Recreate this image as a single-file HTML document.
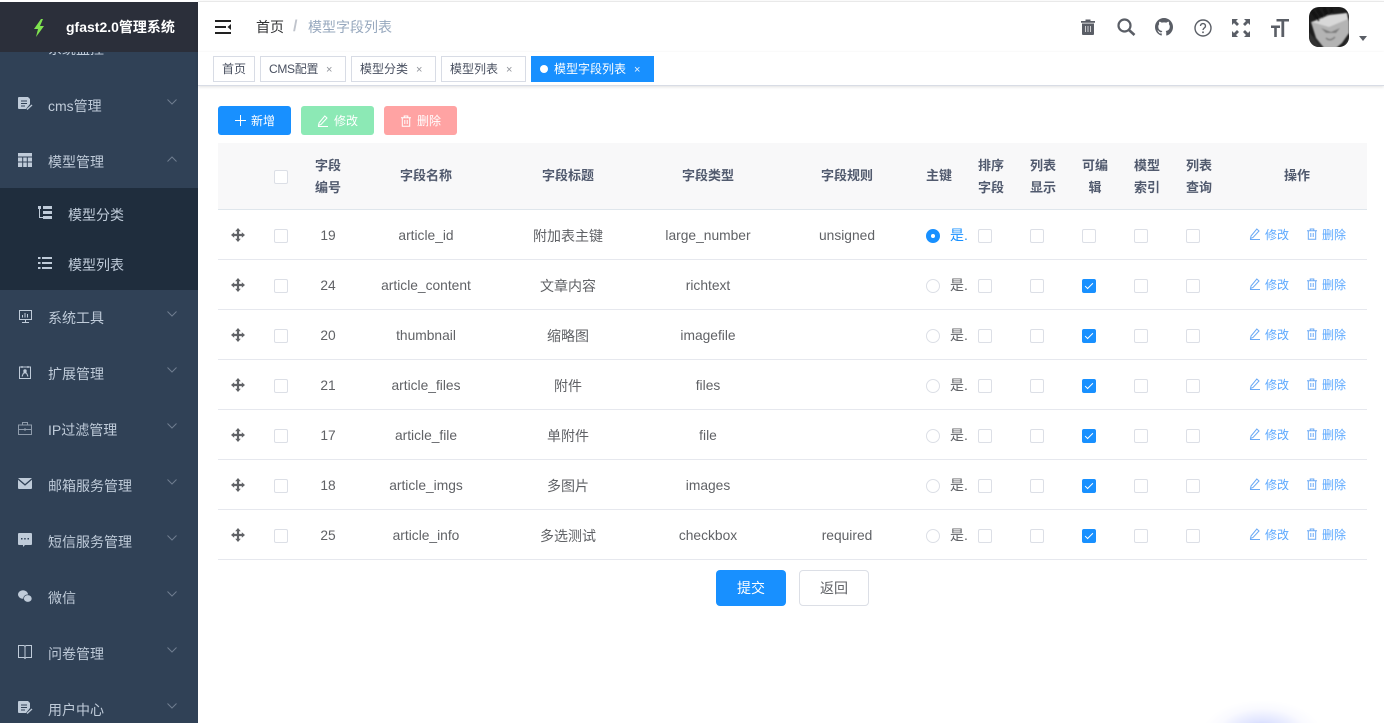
<!DOCTYPE html>
<html lang="zh-CN">
<head>
<meta charset="utf-8">
<title>模型字段列表</title>
<style>
*{box-sizing:border-box}
html,body{margin:0;padding:0;width:1384px;height:723px;overflow:hidden;background:#fff}
body{position:relative;font-family:"Liberation Sans","Noto Sans CJK SC",sans-serif;font-size:14px;color:#606266}
.a{position:absolute;white-space:nowrap}
svg{position:absolute;display:block;overflow:visible}
#side{position:absolute;left:0;top:2px;width:198px;height:721px;background:#304156;overflow:hidden}
#si{position:absolute;left:0;top:-2px;width:198px;height:723px}
#sub{position:absolute;left:0;top:188px;width:198px;height:102px;background:#1f2d3d}
#logo{position:absolute;left:0;top:2px;width:198px;height:50px;background:#2b2f3a}
.m{position:absolute;left:48px;font-size:14px;line-height:20px;color:#bfcbd9;white-space:nowrap}
.ar{position:absolute;left:167px;width:10px;height:6px}
#top{position:absolute;left:198px;top:1px;width:1186px;height:51px;background:#fff;border-top:1px solid #e9e9e9;box-shadow:0 1px 4px rgba(0,21,41,.08)}
#tags{position:absolute;left:198px;top:52px;width:1186px;height:34px;background:#fff;border-bottom:1px solid #d8dce5;box-shadow:0 1px 3px 0 rgba(0,0,0,.12)}
.tag{position:absolute;top:56px;height:26px;border:1px solid #d8dce5;background:#fff;color:#495060;font-size:12px;line-height:25px;padding-left:8px;white-space:nowrap}
.tag i{position:absolute;top:1px;font-style:normal;font-size:11px;color:#909399}
.btn{position:absolute;top:106px;width:73px;height:29px;border-radius:3px;color:#fff;font-size:12px;line-height:29px}
.btn span{position:absolute;left:33px;top:1px}
#th{position:absolute;left:218px;top:143px;width:1149px;height:67px;background:#f8f8f9;border-bottom:1px solid #dfe6ec}
.h{position:absolute;color:#515a6e;font-size:13px;line-height:22px;text-align:center;white-space:nowrap;font-weight:700}
.row{position:absolute;left:218px;width:1149px;height:50px;border-bottom:1px solid #e6e8ee}
.c{position:absolute;top:16px;line-height:20px;font-size:13.8px;color:#606266;text-align:center;white-space:nowrap;transform:translateX(-50%)}
.c.z{font-size:14px}
.cb{position:absolute;top:19px;width:14px;height:14px;border:1px solid #dcdfe6;border-radius:2px;background:#fff}
.cb.on{background:#1890ff;border-color:#1890ff}
.cb.on:after{content:"";position:absolute;left:4px;top:1px;width:3px;height:7px;border:1px solid #fff;border-left:0;border-top:0;transform:rotate(45deg)}
.rd{position:absolute;left:708px;top:19px;width:14px;height:14px;border:1px solid #dcdfe6;border-radius:50%;background:#fff}
.rd.on{background:#1890ff;border-color:#1890ff}
.rd.on:after{content:"";position:absolute;left:4px;top:4px;width:4px;height:4px;border-radius:50%;background:#fff}
.yes{position:absolute;left:732px;top:15px;line-height:20px;font-size:14px;width:18px;overflow:hidden;white-space:nowrap;color:#606266}
.yes.on{color:#1890ff}
.op{position:absolute;top:16px;font-size:12px;line-height:18px;color:#5ba8ff;white-space:nowrap}
</style>
</head>
<body>
<svg width="0" height="0" style="position:absolute">
<defs>
<symbol id="move" viewBox="0 0 14 14"><path d="M7 0 9.800 3.200H8.100v2.700h2.700V4.200L14 7l-3.200 2.800V8.100H8.100v2.700h1.700L7 14l-2.800-3.200h1.700V8.100H3.200v1.700L0 7l3.200-2.800v1.700h2.700V3.200H4.200z" fill="#606266"/></symbol>
<symbol id="pen" viewBox="0 0 12 12"><path d="M7.800 1 10 3 4 9.500 1.500 10.500 2 8zM1 11.500h10" fill="none" stroke="#6aa9f5" stroke-width="1"/></symbol>
<symbol id="bin" viewBox="0 0 12 12"><path d="M1 2.700h10M4.200 2.500V1h3.600v1.500M2.300 2.700v8.600h7.400V2.700M4.800 5v4M7.200 5v4" fill="none" stroke="#6aa9f5" stroke-width="1"/></symbol>
<symbol id="dn" viewBox="0 0 10 6"><path d="M.5.5 5 5 9.500.5" fill="none" stroke="#6f7d8f" stroke-width="1"/></symbol>
<symbol id="doc" viewBox="0 0 15 14"><path d="M1 0h9l2 2v5L8 12H1a1 1 0 0 1-1-1V1a1 1 0 0 1 1-1z" fill="#bfcbd9"/><path d="M3 4h6M3 6.500h6M3 9h4" stroke="#304156" stroke-width="1.100"/><path d="M9 12.500 14 8" stroke="#bfcbd9" stroke-width="1.300"/></symbol>
</defs>
</svg>

<div id="side"><div id="si">
  <div class="m" style="top:39px">系统监控</div>
  <svg style="left:18px;top:47px" width="14" height="5"><rect x="0" y="3" width="14" height="1.500" fill="#bfcbd9"/><rect x="6" y="0" width="2" height="3" fill="#bfcbd9"/></svg>
  <svg style="left:18px;top:97px" width="15" height="14"><use href="#doc" width="15" height="14"/></svg>
  <div class="m" style="top:96px">cms管理</div>
  <svg class="ar" style="top:99px"><use href="#dn" width="10" height="6"/></svg>
  <svg style="left:18px;top:153px" width="14" height="14" viewBox="0 0 14 14"><path d="M0 0h14v14H0z" fill="#bfcbd9"/><path d="M0 4h14M4.700 4v10M9.300 4v10M0 9h14" stroke="#304156" stroke-width="1"/></svg>
  <div class="m" style="top:152px">模型管理</div>
  <svg class="ar" style="top:156px"><path d="M.5 5.500 5 1l4.500 4.500" fill="none" stroke="#6f7d8f"/></svg>
  <div id="sub"></div>
  <svg style="left:38px;top:206px" width="14" height="14" viewBox="0 0 14 14"><path d="M1.500 3v8.500H5" fill="none" stroke="#bfcbd9"/><rect x="0" y="0" width="3" height="3" fill="#bfcbd9"/><path d="M5 0h9v3H5zM5 5h9v3H5zM5 10h9v3H5z" fill="#bfcbd9"/></svg>
  <div class="m" style="left:68px;top:205px">模型分类</div>
  <svg style="left:38px;top:256px" width="14" height="14" viewBox="0 0 14 14"><path d="M0 1h2.500v2H0zM0 6h2.500v2H0zM0 11h2.500v2H0zM4 1h10v2H4zM4 6h10v2H4zM4 11h10v2H4z" fill="#bfcbd9"/></svg>
  <div class="m" style="left:68px;top:255px">模型列表</div>

  <svg style="left:19px;top:310px" width="13" height="13" viewBox="0 0 13 13"><path d="M.5.500h12v9H.5zM3 12.500h7M6.500 10v2" fill="none" stroke="#bfcbd9"/><path d="M3 7.500V5h1v2.500zM5.500 7.500V3h1v4.500zM8 7.500V4h1v3.500z" fill="#bfcbd9"/></svg>
  <div class="m" style="top:308px">系统工具</div>
  <svg class="ar" style="top:311px"><use href="#dn" width="10" height="6"/></svg>

  <svg style="left:19px;top:366px" width="12" height="13" viewBox="0 0 12 13"><path d="M.5 1h11v11.500H.5z" fill="none" stroke="#bfcbd9"/><path d="M3 0v2M9 0v2" stroke="#bfcbd9"/><circle cx="6" cy="5" r="1.700" fill="#bfcbd9"/><path d="M3 10.500 4.500 7h3L9 10.500" fill="none" stroke="#bfcbd9"/></svg>
  <div class="m" style="top:364px">扩展管理</div>
  <svg class="ar" style="top:367px"><use href="#dn" width="10" height="6"/></svg>

  <svg style="left:18px;top:422px" width="14" height="13" viewBox="0 0 14 13"><path d="M.5 3h13v9.500H.5zM4.500 3V.5h5V3M.5 7.500h13M7 6v3" fill="none" stroke="#8e9bab"/></svg>
  <div class="m" style="top:420px">IP过滤管理</div>
  <svg class="ar" style="top:423px"><use href="#dn" width="10" height="6"/></svg>

  <svg style="left:18px;top:478px" width="14" height="11" viewBox="0 0 14 11"><path d="M0 0h14L7 6zM0 1.800 7 7.800l7-6V10a1 1 0 0 1-1 1H1a1 1 0 0 1-1-1z" fill="#bfcbd9"/></svg>
  <div class="m" style="top:476px">邮箱服务管理</div>
  <svg class="ar" style="top:479px"><use href="#dn" width="10" height="6"/></svg>

  <svg style="left:18px;top:533px" width="14" height="14" viewBox="0 0 14 14"><path d="M1 0h12a1 1 0 0 1 1 1v10a1 1 0 0 1-1 1H7l-2 2v-2H1a1 1 0 0 1-1-1V1a1 1 0 0 1 1-1z" fill="#bfcbd9"/><path d="M3 5h1.500v1.500H3zM6.200 5h1.500v1.500H6.200zM9.500 5H11v1.500H9.500z" fill="#304156"/></svg>
  <div class="m" style="top:532px">短信服务管理</div>
  <svg class="ar" style="top:535px"><use href="#dn" width="10" height="6"/></svg>

  <svg style="left:18px;top:590px" width="14" height="13" viewBox="0 0 14 13"><ellipse cx="5" cy="4.500" rx="5" ry="4.300" fill="#bfcbd9"/><ellipse cx="9.800" cy="8.500" rx="4.200" ry="3.700" fill="#bfcbd9" stroke="#304156" stroke-width=".6"/></svg>
  <div class="m" style="top:588px">微信</div>
  <svg class="ar" style="top:591px"><use href="#dn" width="10" height="6"/></svg>

  <svg style="left:18px;top:645px" width="14" height="14" viewBox="0 0 14 14"><path d="M.5.500h5.500l1 1 1-1h5.500v12H8l-1 1-1-1H.5zM7 1.500v11" fill="none" stroke="#bfcbd9"/></svg>
  <div class="m" style="top:644px">问卷管理</div>
  <svg class="ar" style="top:647px"><use href="#dn" width="10" height="6"/></svg>

  <svg style="left:18px;top:701px" width="15" height="14"><use href="#doc" width="15" height="14"/></svg>
  <div class="m" style="top:700px">用户中心</div>
  <svg class="ar" style="top:703px"><use href="#dn" width="10" height="6"/></svg>

  <div id="logo">
    <svg style="left:33px;top:17px" width="12" height="18" viewBox="0 0 12 18"><path d="M8 0 1 10h4L3 18l8-11H7l3-7z" fill="#7fe34f"/></svg>
    <div class="a" style="left:66px;top:15px;color:#fff;font-weight:700;font-size:14px;line-height:20px">gfast2.0管理系统</div>
  </div>
</div></div>

<div id="top"></div>
<svg style="left:215px;top:20px" width="16" height="14" viewBox="0 0 16 14"><path d="M0 0h16v2H0zM0 6h11v2H0zM0 12h16v2H0z" fill="#222"/><path d="M16 4v6l-3.500-3z" fill="#222"/></svg>
<div class="a" style="left:256px;top:17px;line-height:20px;color:#303133">首页</div>
<div class="a" style="left:293px;top:17px;line-height:20px;color:#c0c4cc;font-weight:700;font-size:16px">/</div>
<div class="a" style="left:308px;top:17px;line-height:20px;color:#97a8be">模型字段列表</div>

<svg style="left:1081px;top:19px" width="14" height="16" viewBox="0 0 14 16"><path d="M4.500 2V.5h5V2H14v1.800H0V2zM1 4.500h12V15a1 1 0 0 1-1 1H2a1 1 0 0 1-1-1z" fill="#5a5e66"/><path d="M4.500 7v6M7 7v6M9.500 7v6" stroke="#fff" stroke-width="1" opacity=".7"/></svg>
<svg style="left:1117px;top:18px" width="19" height="18" viewBox="0 0 19 18"><circle cx="7.500" cy="7.500" r="6" fill="none" stroke="#5a5e66" stroke-width="2.200"/><path d="M12 12l5.500 5" stroke="#5a5e66" stroke-width="2.600"/></svg>
<svg style="left:1155px;top:18px" width="18" height="18" viewBox="0 0 16 16"><path fill="#5a5e66" d="M8 0C3.580 0 0 3.580 0 8c0 3.540 2.290 6.530 5.470 7.590.4.070.55-.17.55-.38 0-.19-.01-.82-.01-1.490-2.010.37-2.530-.49-2.690-.94-.09-.23-.48-.94-.82-1.130-.28-.15-.68-.52-.01-.53.63-.01 1.080.58 1.230.82.720 1.210 1.870.87 2.330.66.070-.52.280-.87.510-1.070-1.780-.2-3.640-.89-3.640-3.950 0-.87.310-1.590.820-2.150-.08-.2-.36-1.020.08-2.120 0 0 .67-.21 2.200.82.640-.18 1.320-.27 2-.27s1.360.09 2 .27c1.530-1.040 2.200-.82 2.200-.82.440 1.100.16 1.920.08 2.120.51.560.820 1.270.820 2.150 0 3.070-1.870 3.750-3.650 3.950.29.250.54.730.54 1.480 0 1.070-.01 1.930-.01 2.200 0 .21.150.46.550.38A8.010 8.010 0 0 0 16 8c0-4.420-3.580-8-8-8z"/></svg>
<svg style="left:1194px;top:19px" width="18" height="18" viewBox="0 0 18 18"><circle cx="9" cy="9" r="8" fill="none" stroke="#5a5e66" stroke-width="1.400"/><path d="M6.500 7c0-3.300 5-3.300 5 0 0 2-2.500 2-2.500 4" fill="none" stroke="#5a5e66" stroke-width="1.400"/><rect x="8.200" y="12.500" width="1.600" height="1.600" fill="#5a5e66"/></svg>
<svg style="left:1232px;top:19px" width="18" height="18" viewBox="0 0 18 18"><path d="M0 0h6L4 2l3 3-2 2-3-3-2 2zM18 0v6l-2-2-3 3-2-2 3-3-2-2zM0 18v-6l2 2 3-3 2 2-3 3 2 2zM18 18h-6l2-2-3-3 2-2 3 3 2-2z" fill="#5a5e66"/></svg>
<svg style="left:1271px;top:19px" width="18" height="18" viewBox="0 0 18 18"><path d="M5.500 0H18v2.500h-4.800V18h-2.800V2.500H5.500zM0 6.500h9V9H5.800v9H3.200V9H0z" fill="#5a5e66"/></svg>

<svg style="left:1309px;top:7px" width="40" height="40" viewBox="0 0 40 40">
<defs>
<clipPath id="av"><rect width="40" height="40" rx="10"/></clipPath>
<filter id="bl"><feGaussianBlur stdDeviation=".8"/></filter>
</defs>
<g clip-path="url(#av)">
<rect width="40" height="40" fill="#1c1c1c"/>
<g filter="url(#bl)">
<path d="M2 15 20 9 37 6 40 14 40 26 33 36 27 41H15L7 31z" fill="#b4b4b4"/>
<path d="M3 15 20 20 39 12 38 6 20 8z" fill="#d8d8d8"/>
<path d="M3 4 10 14M8 2 14 11M15 1 18 8M22 2 23 6" stroke="#111" stroke-width="2"/>
<path d="M12 21 22 25 31 21 27 26 17 26z" fill="#7c7c7c"/>
<path d="M17 31c3 3 6 2 9-1" stroke="#777" stroke-width="1.300" fill="none"/>
<path d="M0 25 13 41H0zM33 41 40 30v11z" fill="#333"/>
</g>
</g>
</svg>
<svg style="left:1359px;top:36px" width="8" height="5" viewBox="0 0 8 5"><path d="M0 0h8L4 5z" fill="#5a5e66"/></svg>

<div id="tags"></div>
<div class="tag" style="left:213px;width:42px">首页</div>
<div class="tag" style="left:260px;width:86px"><span style="letter-spacing:-.3px">CMS配置</span><i style="left:65px">×</i></div>
<div class="tag" style="left:351px;width:85px">模型分类<i style="left:64px">×</i></div>
<div class="tag" style="left:441px;width:85px">模型列表<i style="left:64px">×</i></div>
<div class="tag" style="left:531px;width:123px;background:#1890ff;border-color:#1890ff;color:#fff;padding-left:22px"><span style="position:absolute;left:8px;top:8px;width:8px;height:8px;border-radius:50%;background:#fff"></span>模型字段列表<i style="left:102px;color:#e8f3ff">×</i></div>

<div class="btn" style="left:218px;background:#1890ff"><svg style="left:17px;top:9px" width="11" height="11"><path d="M5.500 0v11M0 5.500h11" stroke="#fff" stroke-width="1"/></svg><span>新增</span></div>
<div class="btn" style="left:301px;background:#8ce9b5"><svg style="left:16px;top:9px" width="12" height="12" viewBox="0 0 12 12"><path d="M7.800 1 10 3 4 9.500 1.500 10.500 2 8zM1 11.500h10" fill="none" stroke="#fff"/></svg><span>修改</span></div>
<div class="btn" style="left:384px;background:#ffa3a3"><svg style="left:16px;top:9px" width="12" height="12" viewBox="0 0 12 12"><path d="M1 2.700h10M4.200 2.500V1h3.600v1.500M2.300 2.700v8.600h7.400V2.700M4.800 5v4M7.200 5v4" fill="none" stroke="#fff"/></svg><span>删除</span></div>

<div id="th">
  <span class="cb" style="left:56px;top:27px"></span>
  <div class="h" style="left:90px;width:40px;top:12px">字段<br>编号</div>
  <div class="h" style="left:158px;width:100px;top:22px">字段名称</div>
  <div class="h" style="left:300px;width:100px;top:22px">字段标题</div>
  <div class="h" style="left:440px;width:100px;top:22px">字段类型</div>
  <div class="h" style="left:579px;width:100px;top:22px">字段规则</div>
  <div class="h" style="left:708px;top:22px">主键</div>
  <div class="h" style="left:760px;top:12px">排序<br>字段</div>
  <div class="h" style="left:812px;top:12px">列表<br>显示</div>
  <div class="h" style="left:864px;top:12px">可编<br>辑</div>
  <div class="h" style="left:916px;top:12px">模型<br>索引</div>
  <div class="h" style="left:968px;top:12px">列表<br>查询</div>
  <div class="h" style="left:1029px;width:100px;top:22px">操作</div>
</div>

<div class="row" style="top:210px"><svg style="left:13px;top:18px" width="14" height="14"><use href="#move" width="14" height="14"/></svg><span class="cb" style="left:56px"></span><span class="c" style="left:110px">19</span><span class="c" style="left:208px">article_id</span><span class="c z" style="left:350px">附加表主键</span><span class="c" style="left:490px">large_number</span><span class="c" style="left:629px">unsigned</span><span class="rd on"></span><span class="yes on">是.</span><span class="cb" style="left:760px"></span><span class="cb" style="left:812px"></span><span class="cb" style="left:864px"></span><span class="cb" style="left:916px"></span><span class="cb" style="left:968px"></span><svg style="left:1031px;top:18px" width="12" height="12"><use href="#pen" width="12" height="12"/></svg><span class="op" style="left:1047px">修改</span><svg style="left:1088px;top:18px" width="12" height="12"><use href="#bin" width="12" height="12"/></svg><span class="op" style="left:1104px">删除</span></div>
<div class="row" style="top:260px"><svg style="left:13px;top:18px" width="14" height="14"><use href="#move" width="14" height="14"/></svg><span class="cb" style="left:56px"></span><span class="c" style="left:110px">24</span><span class="c" style="left:208px">article_content</span><span class="c z" style="left:350px">文章内容</span><span class="c" style="left:490px">richtext</span><span class="rd"></span><span class="yes">是.</span><span class="cb" style="left:760px"></span><span class="cb" style="left:812px"></span><span class="cb on" style="left:864px"></span><span class="cb" style="left:916px"></span><span class="cb" style="left:968px"></span><svg style="left:1031px;top:18px" width="12" height="12"><use href="#pen" width="12" height="12"/></svg><span class="op" style="left:1047px">修改</span><svg style="left:1088px;top:18px" width="12" height="12"><use href="#bin" width="12" height="12"/></svg><span class="op" style="left:1104px">删除</span></div>
<div class="row" style="top:310px"><svg style="left:13px;top:18px" width="14" height="14"><use href="#move" width="14" height="14"/></svg><span class="cb" style="left:56px"></span><span class="c" style="left:110px">20</span><span class="c" style="left:208px">thumbnail</span><span class="c z" style="left:350px">缩略图</span><span class="c" style="left:490px">imagefile</span><span class="rd"></span><span class="yes">是.</span><span class="cb" style="left:760px"></span><span class="cb" style="left:812px"></span><span class="cb on" style="left:864px"></span><span class="cb" style="left:916px"></span><span class="cb" style="left:968px"></span><svg style="left:1031px;top:18px" width="12" height="12"><use href="#pen" width="12" height="12"/></svg><span class="op" style="left:1047px">修改</span><svg style="left:1088px;top:18px" width="12" height="12"><use href="#bin" width="12" height="12"/></svg><span class="op" style="left:1104px">删除</span></div>
<div class="row" style="top:360px"><svg style="left:13px;top:18px" width="14" height="14"><use href="#move" width="14" height="14"/></svg><span class="cb" style="left:56px"></span><span class="c" style="left:110px">21</span><span class="c" style="left:208px">article_files</span><span class="c z" style="left:350px">附件</span><span class="c" style="left:490px">files</span><span class="rd"></span><span class="yes">是.</span><span class="cb" style="left:760px"></span><span class="cb" style="left:812px"></span><span class="cb on" style="left:864px"></span><span class="cb" style="left:916px"></span><span class="cb" style="left:968px"></span><svg style="left:1031px;top:18px" width="12" height="12"><use href="#pen" width="12" height="12"/></svg><span class="op" style="left:1047px">修改</span><svg style="left:1088px;top:18px" width="12" height="12"><use href="#bin" width="12" height="12"/></svg><span class="op" style="left:1104px">删除</span></div>
<div class="row" style="top:410px"><svg style="left:13px;top:18px" width="14" height="14"><use href="#move" width="14" height="14"/></svg><span class="cb" style="left:56px"></span><span class="c" style="left:110px">17</span><span class="c" style="left:208px">article_file</span><span class="c z" style="left:350px">单附件</span><span class="c" style="left:490px">file</span><span class="rd"></span><span class="yes">是.</span><span class="cb" style="left:760px"></span><span class="cb" style="left:812px"></span><span class="cb on" style="left:864px"></span><span class="cb" style="left:916px"></span><span class="cb" style="left:968px"></span><svg style="left:1031px;top:18px" width="12" height="12"><use href="#pen" width="12" height="12"/></svg><span class="op" style="left:1047px">修改</span><svg style="left:1088px;top:18px" width="12" height="12"><use href="#bin" width="12" height="12"/></svg><span class="op" style="left:1104px">删除</span></div>
<div class="row" style="top:460px"><svg style="left:13px;top:18px" width="14" height="14"><use href="#move" width="14" height="14"/></svg><span class="cb" style="left:56px"></span><span class="c" style="left:110px">18</span><span class="c" style="left:208px">article_imgs</span><span class="c z" style="left:350px">多图片</span><span class="c" style="left:490px">images</span><span class="rd"></span><span class="yes">是.</span><span class="cb" style="left:760px"></span><span class="cb" style="left:812px"></span><span class="cb on" style="left:864px"></span><span class="cb" style="left:916px"></span><span class="cb" style="left:968px"></span><svg style="left:1031px;top:18px" width="12" height="12"><use href="#pen" width="12" height="12"/></svg><span class="op" style="left:1047px">修改</span><svg style="left:1088px;top:18px" width="12" height="12"><use href="#bin" width="12" height="12"/></svg><span class="op" style="left:1104px">删除</span></div>
<div class="row" style="top:510px"><svg style="left:13px;top:18px" width="14" height="14"><use href="#move" width="14" height="14"/></svg><span class="cb" style="left:56px"></span><span class="c" style="left:110px">25</span><span class="c" style="left:208px">article_info</span><span class="c z" style="left:350px">多选测试</span><span class="c" style="left:490px">checkbox</span><span class="c" style="left:629px">required</span><span class="rd"></span><span class="yes">是.</span><span class="cb" style="left:760px"></span><span class="cb" style="left:812px"></span><span class="cb on" style="left:864px"></span><span class="cb" style="left:916px"></span><span class="cb" style="left:968px"></span><svg style="left:1031px;top:18px" width="12" height="12"><use href="#pen" width="12" height="12"/></svg><span class="op" style="left:1047px">修改</span><svg style="left:1088px;top:18px" width="12" height="12"><use href="#bin" width="12" height="12"/></svg><span class="op" style="left:1104px">删除</span></div>

<div class="a" style="left:716px;top:570px;width:70px;height:36px;background:#1890ff;border-radius:4px;color:#fff;text-align:center;line-height:36px;font-size:14px">提交</div>
<div class="a" style="left:799px;top:570px;width:70px;height:36px;background:#fff;border:1px solid #dcdfe6;border-radius:4px;color:#606266;text-align:center;line-height:34px;font-size:14px">返回</div>

<div class="a" style="left:1202px;top:700px;width:120px;height:23px;background:radial-gradient(ellipse 60px 34px at 60px 34px,rgba(90,110,255,.42) 0,rgba(120,140,255,.22) 40%,rgba(160,170,255,.06) 75%,rgba(255,255,255,0) 100%)"></div>
</body>
</html>
